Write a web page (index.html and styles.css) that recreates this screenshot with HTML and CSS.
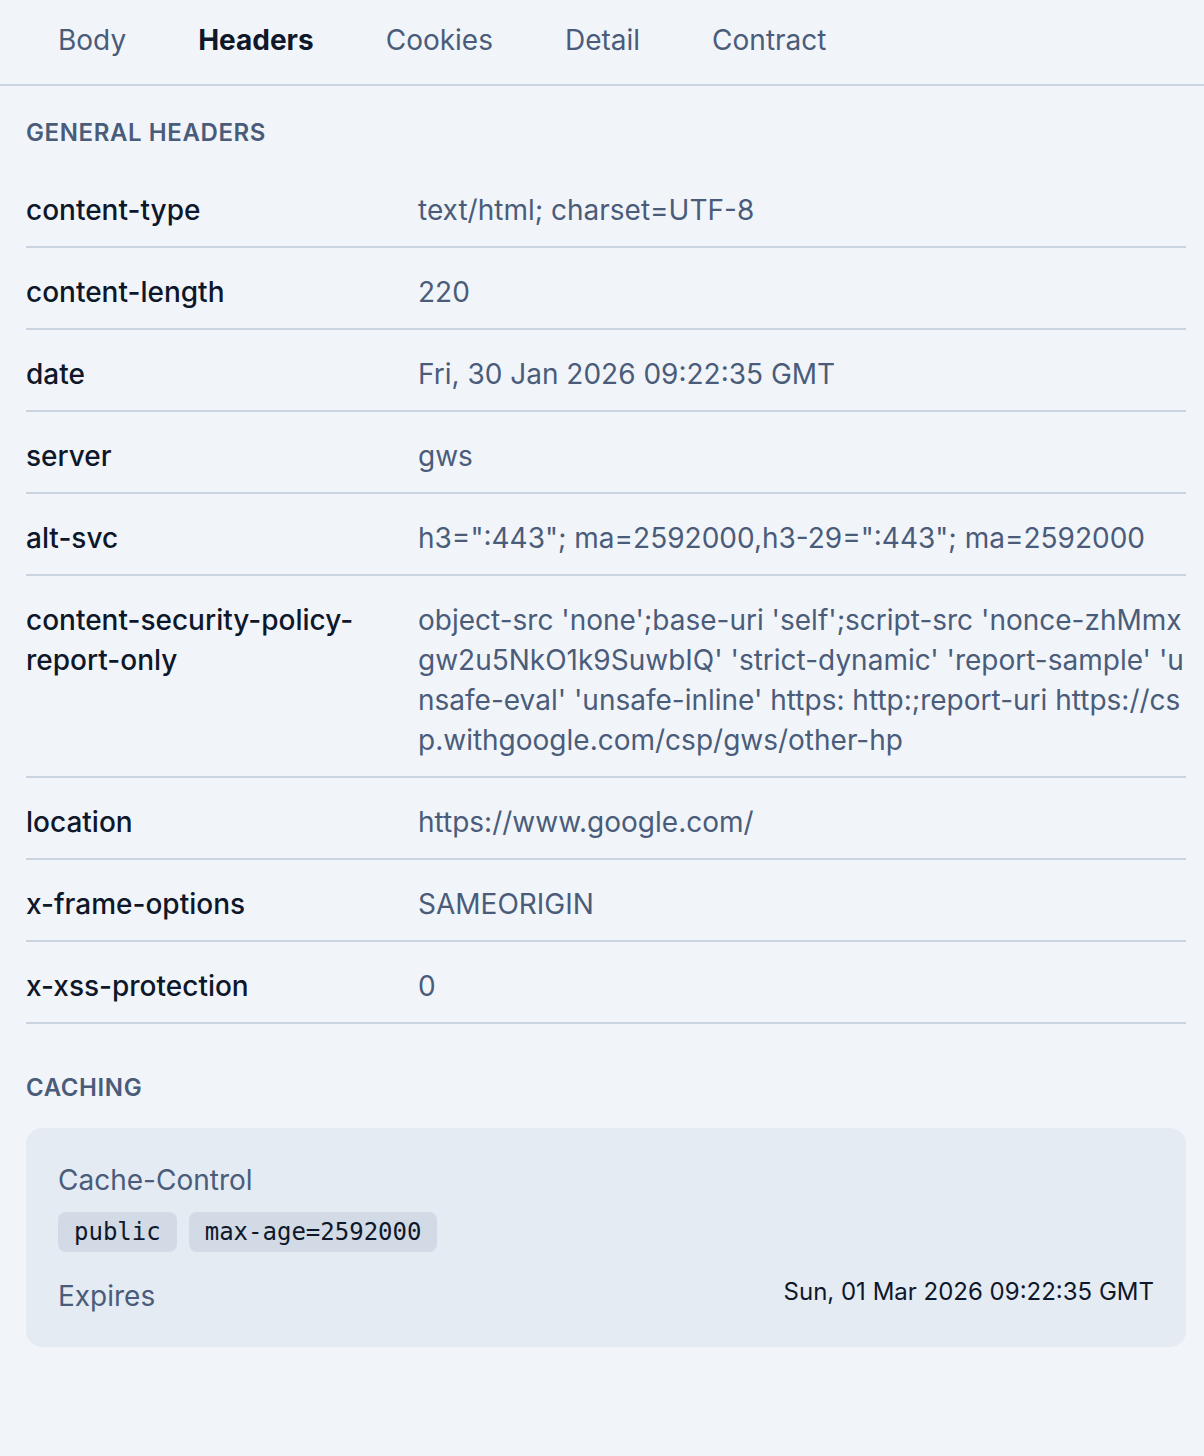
FILE: index.html
```html
<!DOCTYPE html>
<html>
<head>
<meta charset="utf-8">
<link rel="stylesheet" href="styles.css">
</head>
<body>
<nav class="tabs">
  <div class="tab">Body</div>
  <div class="tab active">Headers</div>
  <div class="tab">Cookies</div>
  <div class="tab">Detail</div>
  <div class="tab">Contract</div>
</nav>
<main class="content">
  <h2 class="section-title">General Headers</h2>
  <div class="rows">
    <div class="row"><div class="key">content-type</div><div class="val">text/html; charset=UTF-8</div></div>
    <div class="row"><div class="key">content-length</div><div class="val">220</div></div>
    <div class="row"><div class="key">date</div><div class="val">Fri, 30 Jan 2026 09:22:35 GMT</div></div>
    <div class="row"><div class="key">server</div><div class="val">gws</div></div>
    <div class="row"><div class="key">alt-svc</div><div class="val">h3=":443"; ma=2592000,h3-29=":443"; ma=2592000</div></div>
    <div class="row"><div class="key">content-security-policy-report-only</div><div class="val">object-src 'none';base-uri 'self';script-src 'nonce-zhMmxgw2u5NkO1k9SuwbIQ' 'strict-dynamic' 'report-sample' 'unsafe-eval' 'unsafe-inline' https: http:;report-uri https://csp.withgoogle.com/csp/gws/other-hp</div></div>
    <div class="row"><div class="key">location</div><div class="val">https://www.google.com/</div></div>
    <div class="row"><div class="key">x-frame-options</div><div class="val">SAMEORIGIN</div></div>
    <div class="row"><div class="key">x-xss-protection</div><div class="val">0</div></div>
  </div>
  <h2 class="section-title caching-title">Caching</h2>
  <div class="cache-box">
    <div class="cache-label">Cache-Control</div>
    <div class="chips">
      <span class="chip">public</span>
      <span class="chip">max-age=2592000</span>
    </div>
    <div class="expires">
      <span class="cache-label">Expires</span>
      <span class="expires-val">Sun, 01 Mar 2026 09:22:35 GMT</span>
    </div>
  </div>
</main>
</body>
</html>
```
FILE: styles.css
```css
* { box-sizing: border-box; }
html, body { margin: 0; padding: 0; }
body {
  background: #f1f5f9;
  font-family: Inter, "Noto Sans", sans-serif;
  color: #0f172a;
  width: 1204px;
  min-height: 1456px;
}
.tabs {
  display: flex;
  height: 86px;
  padding-left: 22px;
  border-bottom: 2px solid #cbd5e1;
  align-items: center;
}
.tab {
  font-size: 28px;
  color: #4a5c7a;
  padding: 0 36px 4px;
  line-height: 40px;
}
.tab.active {
  color: #0f172a;
  font-weight: 700;
}
.content {
  padding: 0 18px 0 26px;
}
.section-title {
  margin: 0;
  padding-top: 31px;
  height: 80px;
  font-size: 24px;
  line-height: 32px;
  font-weight: 600;
  letter-spacing: 0.6px;
  text-transform: uppercase;
  color: #4a5c7a;
}
.caching-title {
  padding-top: 48px;
  height: 104px;
}
.row {
  display: grid;
  grid-template-columns: 360px 1fr;
  column-gap: 32px;
  padding: 24px 0 16px;
  border-bottom: 2px solid #cbd5e1;
  font-size: 28px;
  line-height: 40px;
}
.key {
  color: #0f172a;
  font-weight: 500;
  word-break: break-word;
}
.val {
  color: #4a5c7a;
  word-break: break-all;
}
.cache-box {
  background: #e4ebf3;
  border-radius: 16px;
  padding: 32px 32px 0;
  height: 219px;
}
.cache-label {
  font-size: 28px;
  line-height: 40px;
  color: #4a5c7a;
}
.chips {
  display: flex;
  gap: 12px;
  margin-top: 12px;
}
.chip {
  font-family: "DejaVu Sans Mono", monospace;
  font-size: 24px;
  line-height: 40px;
  padding: 0 16px;
  background: #d1dae5;
  border-radius: 8px;
  color: #0f172a;
}
.expires {
  display: flex;
  justify-content: space-between;
  align-items: flex-start;
  margin-top: 24px;
}
.expires-val {
  font-size: 24px;
  line-height: 32px;
  color: #0f172a;
}
```
